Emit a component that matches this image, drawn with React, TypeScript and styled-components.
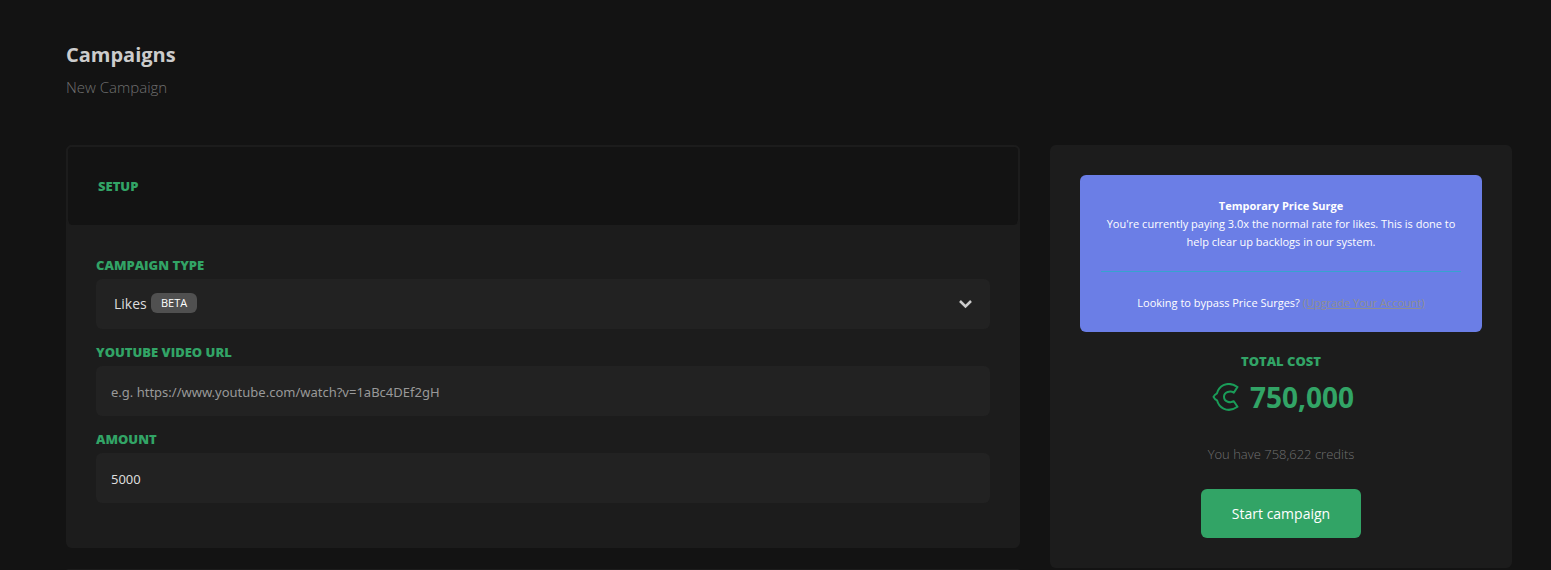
import React from "react";
import styled, { createGlobalStyle } from "styled-components";

const GlobalStyle = createGlobalStyle`
  * { box-sizing: border-box; }
  body {
    margin: 0;
    background: #131313;
    color: #cccccc;
    font-family: "Segoe UI", "Open Sans", "Noto Sans", sans-serif;
    font-size: 14px;
    line-height: 20px;
  }
`;

const Page = styled.main`
  padding: 40px 39px 0 66px;
`;

const PageHeader = styled.header`
  margin-bottom: 47px;
`;

const Title = styled.h1`
  margin: 0;
  font-size: 20px;
  line-height: 30px;
  font-weight: 700;
`;

const Subtitle = styled.p`
  margin: 6px 0 0;
  font-size: 15px;
  line-height: 22px;
  font-weight: 300;
  color: #707070;
`;

const Columns = styled.div`
  display: grid;
  grid-template-columns: repeat(12, minmax(0, 1fr));
  column-gap: 30px;
  align-items: start;
`;

const Column = styled.div<{ $span: number }>`
  grid-column: span ${(p) => p.$span};
  display: grid;
  gap: 21px;
`;

const Card = styled.section`
  border-radius: 6px;
  background: #1c1c1c;
`;

const NextCardEdge = styled.div`
  height: 2px;
  border-radius: 6px 6px 0 0;
  background: #1c1c1c;
`;

const CardHeader = styled.div`
  padding: 30px;
  border: 2px solid #1c1c1c;
  border-bottom: 0;
  border-radius: 6px;
  background: #131313;
`;

const Caps = styled.h2`
  margin: 0;
  font-size: 13px;
  line-height: 18px;
  font-weight: 800;
  text-transform: uppercase;
  color: #32a466;
`;

const Form = styled.form`
  display: grid;
  gap: 14px;
  padding: 31px 30px 45px;
`;

const Field = styled.div`
  display: grid;
  gap: 5px;
`;

const Control = styled.div`
  position: relative;
  display: grid;
`;

const inputBase = `
  width: 100%;
  height: 50px;
  border: 0;
  border-radius: 6px;
  background: #222222;
  color: #dddddd;
`;

const Input = styled.input`
  ${inputBase}
  padding: 1px 15px 0;
  font-family: "Segoe UI", "Noto Sans", sans-serif;
  font-size: 13px;
  &::placeholder { color: #999999; opacity: 1; }
`;

const Select = styled.select`
  ${inputBase}
  appearance: none;
  padding: 0 18px 2px;
  font-family: inherit;
  font-size: 14px;
`;

const Badge = styled.span`
  position: absolute;
  left: 55px;
  top: 14px;
  padding: 0 10px;
  border-radius: 6px;
  background: #505050;
  color: #ffffff;
  font-size: 11px;
  line-height: 20px;
  pointer-events: none;
`;

const Chevron = styled.svg`
  position: absolute;
  right: 18px;
  top: 20px;
  pointer-events: none;
`;

const Summary = styled(Card)`
  display: flex;
  flex-direction: column;
  align-items: center;
  padding: 30px;
`;

const Surge = styled.div`
  width: 100%;
  margin-bottom: 20px;
  padding: 22px 21px 20px;
  border-radius: 6px;
  background: #6b7ee6;
  color: #ffffff;
  font-size: 11px;
  line-height: 18px;
  text-align: center;
`;

const SurgeText = styled.p`
  margin: 0;
`;

const Divider = styled.hr`
  margin: 20px 0 22px;
  border: 0;
  border-top: 1px solid #36a3d0;
`;

const UpgradeLink = styled.a`
  color: #909090;
  text-decoration: underline;
`;

const Cost = styled.div`
  display: flex;
  align-items: center;
  gap: 10px;
  margin-top: 8px;
  padding-left: 4px;
  font-size: 28px;
  line-height: 38px;
  font-weight: 700;
  color: #32a466;
`;

const Balance = styled.p`
  margin: 28px 0 25px;
  font-size: 13px;
  font-weight: 300;
  color: #707070;
`;

const StartButton = styled.button`
  min-width: 160px;
  height: 49px;
  padding: 0 30px;
  border: 0;
  border-radius: 6px;
  background: #32a466;
  color: #ffffff;
  font-family: inherit;
  font-size: 14px;
`;

function CreditIcon() {
  return (
    <svg width="28" height="28" viewBox="0 0 28 28" fill="none" stroke="#1a9c58" strokeWidth="2" strokeLinejoin="round" aria-hidden="true">
      <path d="M25.500 4C21 0.800 15.500 0.300 11.500 2.200C8.200 3.800 6 6.600 5 10.300C4 10.800 2.200 12.300 1.500 13.800C2.200 15.300 4 16.800 5 17.300C6 21 8.200 24 11.500 25.600C15.500 27.500 21 27 25.500 23.800L21.800 18.200C18.500 20.200 12 19 12 13.800C12 8.600 18.500 7.600 21.800 9.600Z" />
    </svg>
  );
}

export default function App() {
  return (
    <>
      <GlobalStyle />
      <Page>
        <PageHeader>
          <Title>Campaigns</Title>
          <Subtitle>New Campaign</Subtitle>
        </PageHeader>
        <Columns>
          <Column $span={8}>
            <Card>
              <CardHeader>
                <Caps>Setup</Caps>
              </CardHeader>
              <Form id="campaign">
                <Field>
                  <Caps as="label" htmlFor="type">Campaign type</Caps>
                  <Control>
                    <Select id="type">
                      <option>Likes</option>
                    </Select>
                    <Badge>BETA</Badge>
                    <Chevron width="13" height="10" viewBox="0 0 13 10" fill="none" stroke="#cccccc" strokeWidth="2.500" aria-hidden="true">
                      <path d="M1 2L6.500 7.500L12 2" />
                    </Chevron>
                  </Control>
                </Field>
                <Field>
                  <Caps as="label" htmlFor="url">YouTube video URL</Caps>
                  <Input id="url" type="url" placeholder="e.g. https://www.youtube.com/watch?v=1aBc4DEf2gH" />
                </Field>
                <Field>
                  <Caps as="label" htmlFor="amount">Amount</Caps>
                  <Input id="amount" inputMode="numeric" defaultValue="5000" />
                </Field>
              </Form>
            </Card>
            <NextCardEdge />
          </Column>
          <Column $span={4}>
            <Summary>
              <Surge>
                <SurgeText><strong>Temporary Price Surge</strong></SurgeText>
                <SurgeText>
                  You're currently paying 3.0x the normal rate for likes. This is done to help clear up backlogs in our system.
                </SurgeText>
                <Divider />
                <SurgeText>
                  Looking to bypass Price Surges? <UpgradeLink href="#upgrade">(Upgrade Your Account)</UpgradeLink>
                </SurgeText>
              </Surge>
              <Caps>Total cost</Caps>
              <Cost>
                <CreditIcon />
                <span>750,000</span>
              </Cost>
              <Balance>You have 758,622 credits</Balance>
              <StartButton type="submit" form="campaign">Start campaign</StartButton>
            </Summary>
          </Column>
        </Columns>
      </Page>
    </>
  );
}
